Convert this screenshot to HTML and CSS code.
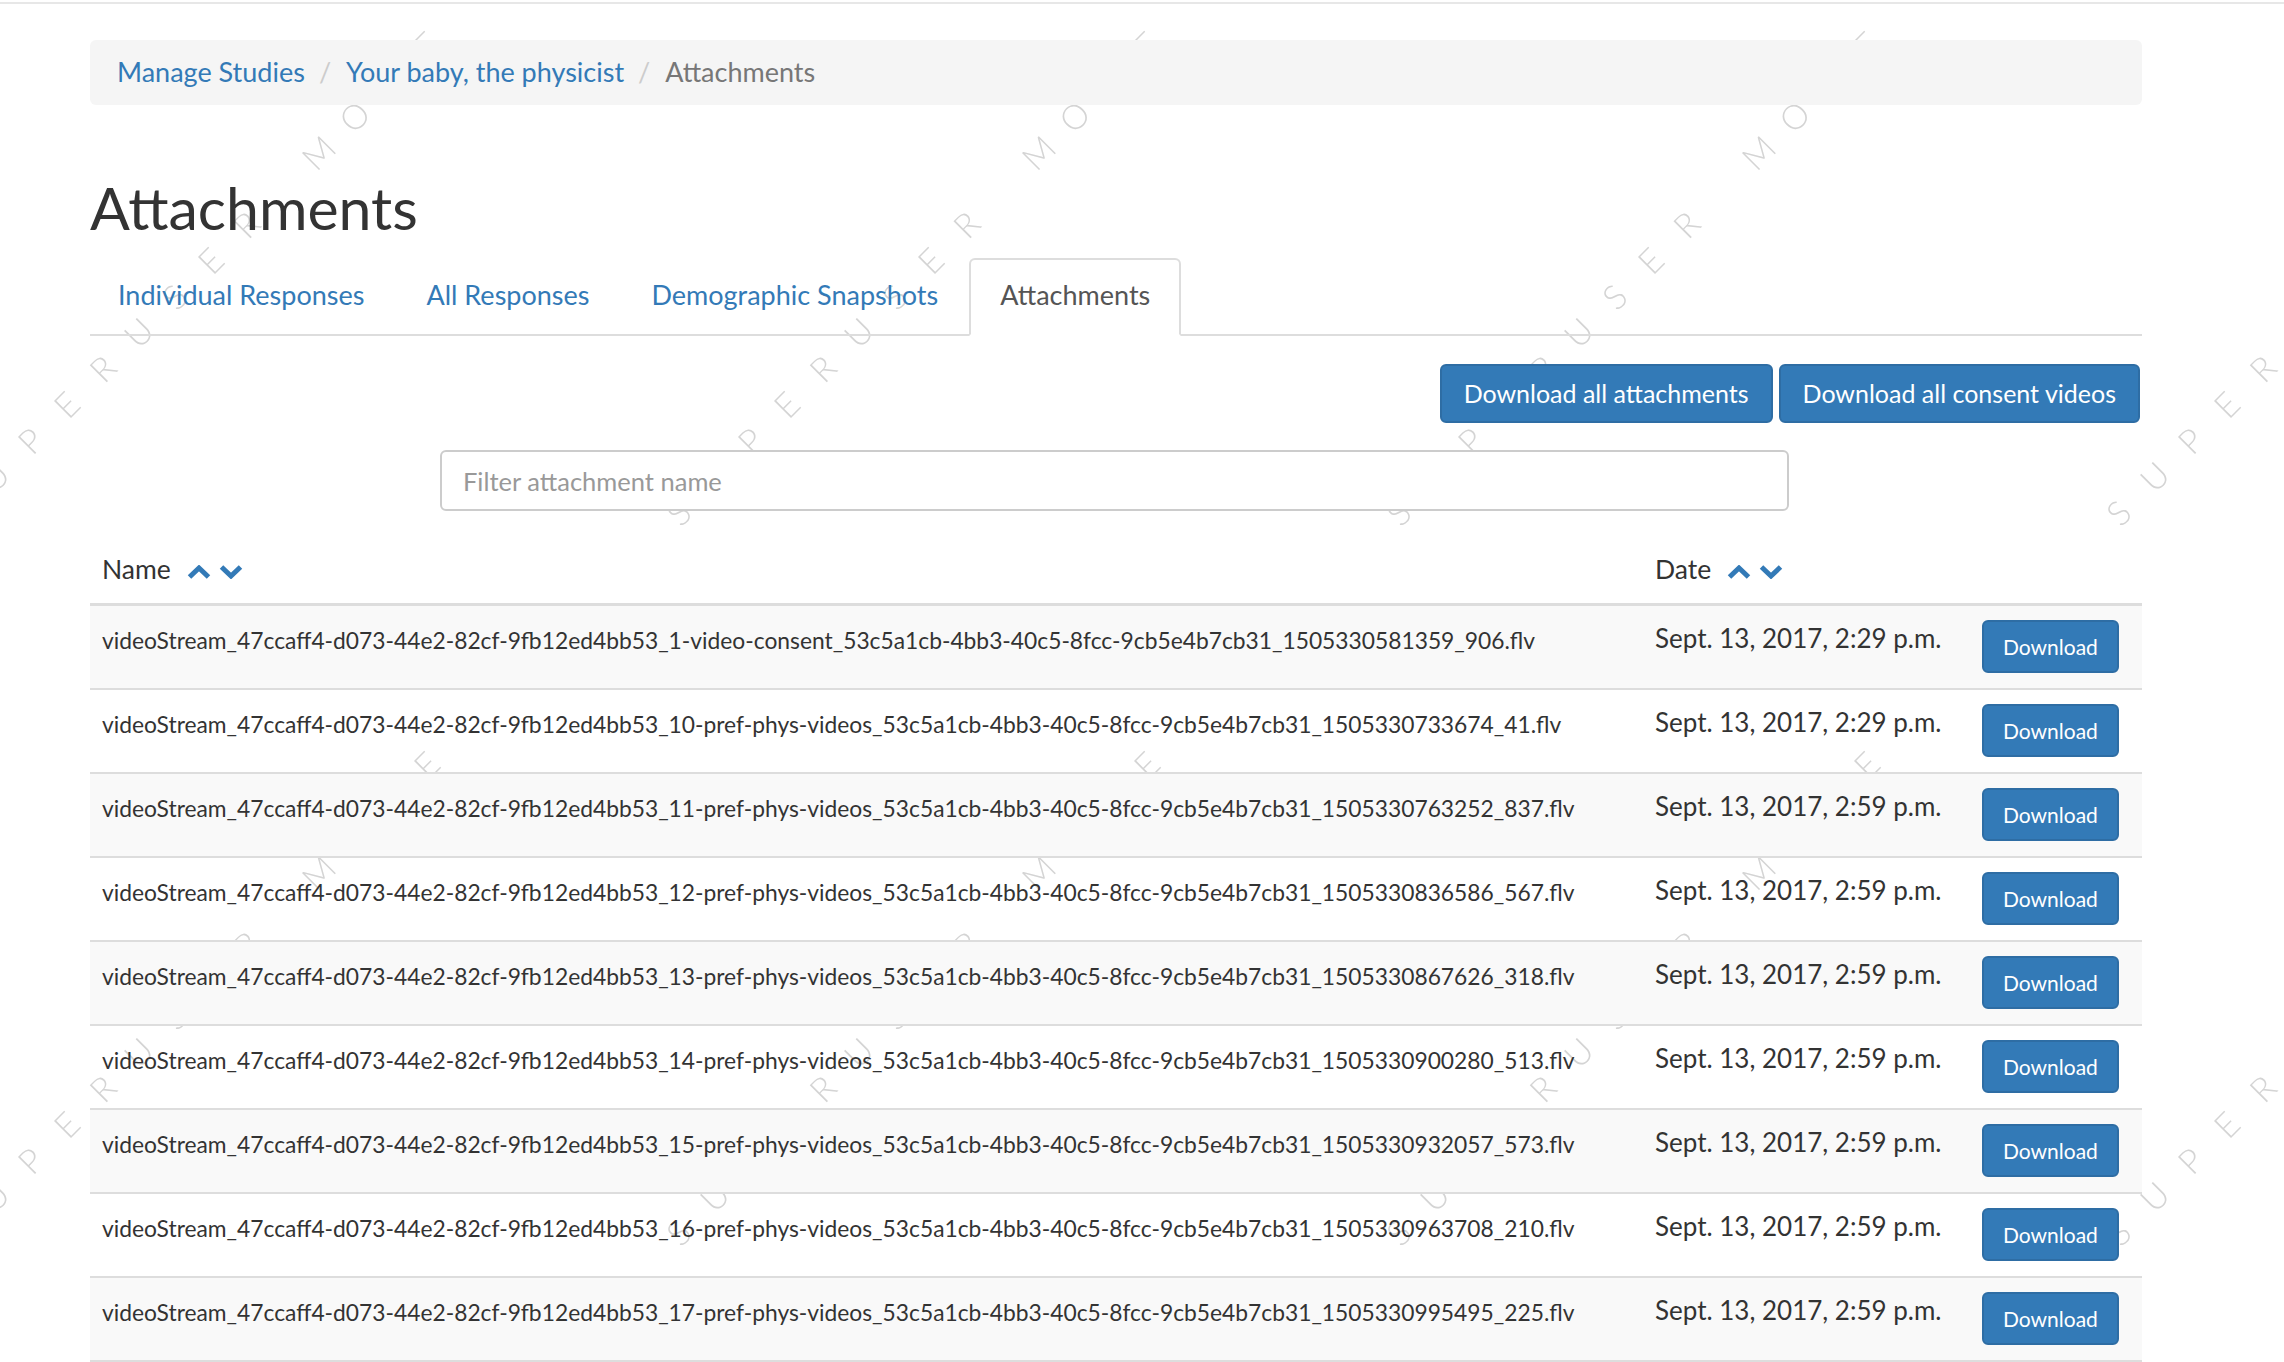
FILE: index.html
```html
<!DOCTYPE html>
<html lang="en">
<head>
<meta charset="utf-8">
<title>Attachments</title>
<link rel="stylesheet" href="styles.css">
</head>
<body>
<div class="topline"></div>
<svg class="watermark" xmlns="http://www.w3.org/2000/svg" aria-hidden="true">
  <defs>
    <pattern id="wm" patternUnits="userSpaceOnUse" x="579" y="0" width="720" height="720">
      <text class="wm-text" transform="translate(100 513) rotate(-45)" x="0 50.9 101.8 152.7 203.6 254.5 305.4 356.3 407.2 509 559.9 610.8 661.7" y="12">SUPERUSERMODE</text>
    </pattern>
  </defs>
  <rect width="100%" height="100%" fill="url(#wm)"/>
</svg>
<div class="container">
  <ol class="breadcrumb">
    <li><a href="#">Manage Studies</a></li>
    <li><a href="#">Your baby, the physicist</a></li>
    <li class="active">Attachments</li>
  </ol>

  <h1>Attachments</h1>

  <ul class="nav-tabs">
    <li><a href="#">Individual Responses</a></li>
    <li><a href="#">All Responses</a></li>
    <li><a href="#">Demographic Snapshots</a></li>
    <li class="active"><a href="#">Attachments</a></li>
  </ul>

  <div class="actions">
    <a class="btn" href="#">Download all attachments</a>
    <a class="btn" href="#">Download all consent videos</a>
  </div>

  <input class="filter" type="text" placeholder="Filter attachment name">

  <table class="attachments">
    <colgroup>
      <col class="col-name">
      <col class="col-date">
      <col class="col-action">
    </colgroup>
    <thead>
      <tr>
        <th>Name<span class="sort"><svg class="chev" viewBox="0 0 24 14"><polyline points="2.5,12 12,3 21.5,12"/></svg><svg class="chev" viewBox="0 0 24 14"><polyline points="2.5,2 12,11 21.5,2"/></svg></span></th>
        <th>Date<span class="sort"><svg class="chev" viewBox="0 0 24 14"><polyline points="2.5,12 12,3 21.5,12"/></svg><svg class="chev" viewBox="0 0 24 14"><polyline points="2.5,2 12,11 21.5,2"/></svg></span></th>
        <th></th>
      </tr>
    </thead>
    <tbody>
      <tr>
        <td class="fname">videoStream_47ccaff4-d073-44e2-82cf-9fb12ed4bb53_1-video-consent_53c5a1cb-4bb3-40c5-8fcc-9cb5e4b7cb31_1505330581359_906.flv</td>
        <td>Sept. 13, 2017, 2:29 p.m.</td>
        <td><a class="btn btn-sm" href="#">Download</a></td>
      </tr>
      <tr>
        <td class="fname">videoStream_47ccaff4-d073-44e2-82cf-9fb12ed4bb53_10-pref-phys-videos_53c5a1cb-4bb3-40c5-8fcc-9cb5e4b7cb31_1505330733674_41.flv</td>
        <td>Sept. 13, 2017, 2:29 p.m.</td>
        <td><a class="btn btn-sm" href="#">Download</a></td>
      </tr>
      <tr>
        <td class="fname">videoStream_47ccaff4-d073-44e2-82cf-9fb12ed4bb53_11-pref-phys-videos_53c5a1cb-4bb3-40c5-8fcc-9cb5e4b7cb31_1505330763252_837.flv</td>
        <td>Sept. 13, 2017, 2:59 p.m.</td>
        <td><a class="btn btn-sm" href="#">Download</a></td>
      </tr>
      <tr>
        <td class="fname">videoStream_47ccaff4-d073-44e2-82cf-9fb12ed4bb53_12-pref-phys-videos_53c5a1cb-4bb3-40c5-8fcc-9cb5e4b7cb31_1505330836586_567.flv</td>
        <td>Sept. 13, 2017, 2:59 p.m.</td>
        <td><a class="btn btn-sm" href="#">Download</a></td>
      </tr>
      <tr>
        <td class="fname">videoStream_47ccaff4-d073-44e2-82cf-9fb12ed4bb53_13-pref-phys-videos_53c5a1cb-4bb3-40c5-8fcc-9cb5e4b7cb31_1505330867626_318.flv</td>
        <td>Sept. 13, 2017, 2:59 p.m.</td>
        <td><a class="btn btn-sm" href="#">Download</a></td>
      </tr>
      <tr>
        <td class="fname">videoStream_47ccaff4-d073-44e2-82cf-9fb12ed4bb53_14-pref-phys-videos_53c5a1cb-4bb3-40c5-8fcc-9cb5e4b7cb31_1505330900280_513.flv</td>
        <td>Sept. 13, 2017, 2:59 p.m.</td>
        <td><a class="btn btn-sm" href="#">Download</a></td>
      </tr>
      <tr>
        <td class="fname">videoStream_47ccaff4-d073-44e2-82cf-9fb12ed4bb53_15-pref-phys-videos_53c5a1cb-4bb3-40c5-8fcc-9cb5e4b7cb31_1505330932057_573.flv</td>
        <td>Sept. 13, 2017, 2:59 p.m.</td>
        <td><a class="btn btn-sm" href="#">Download</a></td>
      </tr>
      <tr>
        <td class="fname">videoStream_47ccaff4-d073-44e2-82cf-9fb12ed4bb53_16-pref-phys-videos_53c5a1cb-4bb3-40c5-8fcc-9cb5e4b7cb31_1505330963708_210.flv</td>
        <td>Sept. 13, 2017, 2:59 p.m.</td>
        <td><a class="btn btn-sm" href="#">Download</a></td>
      </tr>
      <tr>
        <td class="fname">videoStream_47ccaff4-d073-44e2-82cf-9fb12ed4bb53_17-pref-phys-videos_53c5a1cb-4bb3-40c5-8fcc-9cb5e4b7cb31_1505330995495_225.flv</td>
        <td>Sept. 13, 2017, 2:59 p.m.</td>
        <td><a class="btn btn-sm" href="#">Download</a></td>
      </tr>
    </tbody>
  </table>
</div>
</body>
</html>
```

FILE: styles.css
```css
html {
  background: #fff;
}

body {
  margin: 0;
  font-family: "Lato", "Liberation Sans", sans-serif;
  font-size: 26px;
  line-height: 1.42857;
  color: #333;
}

.topline {
  height: 2px;
  border-bottom: 2px solid #e7e7e7;
}

.watermark {
  position: absolute;
  top: 0;
  left: 0;
  width: 100%;
  height: 1362px;
  z-index: -1;
}

.wm-text {
  font-family: "Lato", "Liberation Sans", sans-serif;
  font-weight: 300;
  font-size: 34px;
  fill: #d4d4d4;
  text-anchor: middle;
}

.container {
  width: 2052px;
  margin-left: 90px;
}

/* Breadcrumb */
.breadcrumb {
  display: flex;
  list-style: none;
  margin: 36px 0 0;
  padding: 13px 27px 15px;
  background: #f5f5f5;
  border-radius: 6px;
  font-size: 27px;
  line-height: 37px;
}

.breadcrumb li + li::before {
  content: "/\00a0";
  padding: 0 8px 0 14px;
  color: #ccc;
}

.breadcrumb a {
  color: #337ab7;
  text-decoration: none;
}

.breadcrumb .active {
  color: #777;
}

/* Heading */
h1 {
  font-size: 59px;
  font-weight: 400;
  line-height: 64px;
  margin: 71px 0 18px;
  color: #333;
}

/* Tabs */
.nav-tabs {
  display: flex;
  list-style: none;
  margin: 0;
  padding: 0;
  border-bottom: 2px solid #ddd;
  font-size: 27px;
  line-height: 37px;
}

.nav-tabs li {
  margin: 0 5px -2px 0;
}

.nav-tabs a {
  display: block;
  padding: 16px 27px 21px 26px;
  border: 2px solid transparent;
  border-radius: 6px 6px 0 0;
  color: #337ab7;
  text-decoration: none;
}

.nav-tabs li.active {
  margin-left: -3px;
}

.nav-tabs .active a {
  padding-left: 29px;
  padding-right: 29px;
  color: #555;
  background: #fff;
  border-color: #ddd;
  border-bottom-color: transparent;
}

/* Buttons */
.actions {
  display: flex;
  justify-content: flex-end;
  gap: 6px;
  margin: 28px 2px 0 0;
}

.btn {
  display: inline-block;
  padding: 9px 22px;
  border: 2px solid #2e6da4;
  border-radius: 6px;
  background: #337ab7;
  color: #fff;
  font-size: 25px;
  line-height: 37px;
  text-decoration: none;
  white-space: nowrap;
}

.btn-sm {
  font-size: 21px;
  line-height: 31px;
  padding: 9px 19px;
}

/* Filter */
.filter {
  display: block;
  box-sizing: border-box;
  width: 1349px;
  height: 61px;
  margin: 27px 0 0 350px;
  padding: 0 21px;
  border: 2px solid #ccc;
  border-radius: 6px;
  background: #fff;
  font-family: inherit;
  font-size: 25.5px;
  color: #555;
  outline: none;
}

.filter::placeholder {
  color: #999;
}

/* Table */
.attachments {
  width: 100%;
  margin-top: 28px;
  border-collapse: collapse;
  table-layout: fixed;
}

.col-name { width: 1553px; }
.col-date { width: 327px; }
.col-action { width: 172px; }

.attachments th {
  text-align: left;
  padding: 12px 12px 15px;
  border-bottom: 3px solid #ddd;
  font-size: 26.5px;
  font-weight: 400;
  line-height: 37px;
  vertical-align: bottom;
  white-space: nowrap;
}

.attachments td {
  padding: 14px 12px 15px;
  border-top: 2px solid #ddd;
  vertical-align: top;
  white-space: nowrap;
}

.attachments tbody tr:nth-child(odd) td {
  background: #f9f9f9;
}

.attachments tbody tr:last-child td {
  border-bottom: 2px solid #ddd;
}

.attachments td.fname {
  font-size: 22.8px;
  line-height: 40px;
}

.sort {
  display: inline-flex;
  gap: 8px;
  margin-left: 16px;
}

.chev {
  width: 24px;
  height: 14px;
  fill: none;
  stroke: #337ab7;
  stroke-width: 5;
}
```
